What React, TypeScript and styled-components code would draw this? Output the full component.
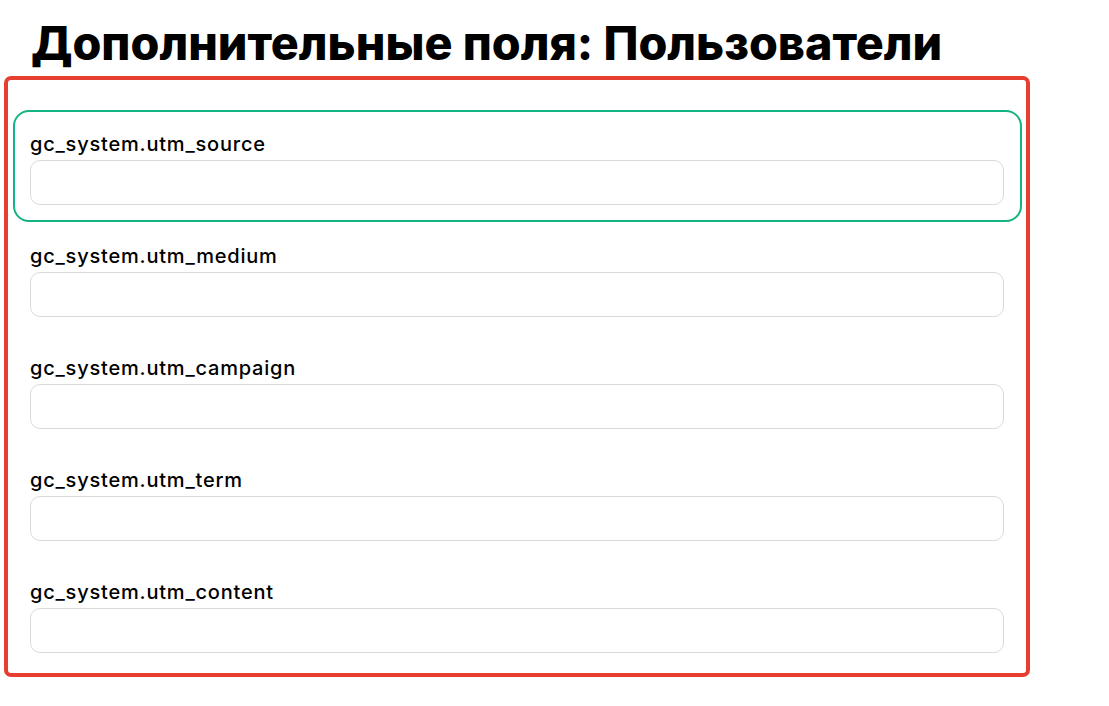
import React from 'react';
import styled, { createGlobalStyle } from 'styled-components';

const GlobalStyle = createGlobalStyle`
  * {
    box-sizing: border-box;
  }
  body {
    margin: 0;
    background: #ffffff;
    font-family: Inter, "Noto Sans", sans-serif;
    color: #000000;
  }
`;

const Page = styled.div`
  width: 1109px;
  padding: 14px 0 0 4px;
`;

const Title = styled.h1`
  margin: 0 0 0 27px;
  font-size: 46.7px;
  line-height: 58px;
  font-weight: 800;
  white-space: nowrap;
`;

const FieldsPanel = styled.div`
  width: 1026px;
  margin-top: 4px;
  border: 4px solid #e63e30;
  border-radius: 7px;
  padding: 30px 4px 3px 5px;
  display: flex;
  flex-direction: column;
`;

const Field = styled.div<{ $active?: boolean }>`
  border: 2px solid ${(p) => (p.$active ? '#14b383' : 'transparent')};
  border-radius: 16px;
  padding: 20px 16px 15px 15px;
  display: flex;
  flex-direction: column;
  gap: 4px;
`;

const Label = styled.label`
  font-size: 20px;
  line-height: 24px;
  font-weight: 500;
  letter-spacing: 0.8px;
  color: #000000;
`;

const Input = styled.input`
  height: 45px;
  width: 100%;
  border: 1px solid #dadada;
  border-radius: 10px;
  background: #ffffff;
  padding: 0 14px;
  font-family: inherit;
  font-size: 16px;
  outline: none;
`;

const fields = [
  'gc_system.utm_source',
  'gc_system.utm_medium',
  'gc_system.utm_campaign',
  'gc_system.utm_term',
  'gc_system.utm_content',
];

const App: React.FC = () => (
  <>
    <GlobalStyle />
    <Page>
      <Title>Дополнительные поля: Пользователи</Title>
      <FieldsPanel>
        {fields.map((name, i) => (
          <Field key={name} $active={i === 0}>
            <Label>{name}</Label>
            <Input type="text" />
          </Field>
        ))}
      </FieldsPanel>
    </Page>
  </>
);

export default App;
